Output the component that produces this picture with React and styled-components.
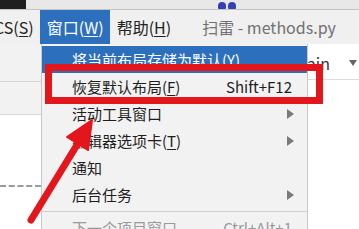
import React from 'react'
import styled, { createGlobalStyle } from 'styled-components'

const Global = createGlobalStyle`
  html, body { margin: 0; padding: 0; background: #fff; }
  body { overflow: hidden; }
  #root { width: 359px; height: 229px; }
`

const font = `"Noto Sans CJK SC", "Noto Sans", sans-serif`

const Page = styled.div`
  position: relative;
  width: 359px;
  height: 229px;
  overflow: hidden;
  background: #fff;
  font-family: ${font};
  display: flex;
  flex-direction: column;
`

const TopStrip = styled.div`
  height: 9px;
  flex: none;
  display: flex;
  background: #e8e8e8;
  border-bottom: 1px solid #c4c4c4;
`

const DarkBlock = styled.div`
  width: 26px;
  background: #1f1f1f;
`

const Dots = styled.div`
  margin-left: 192px;
  display: flex;
  gap: 2px;
  span {
    width: 8px;
    height: 7px;
    margin-top: 2px;
    border-radius: 4px 4px 1px 1px;
    background: #3540b5;
  }
`

const MenuBar = styled.div`
  height: 34px;
  flex: none;
  display: flex;
  align-items: stretch;
  background: #f0f0f0;
  margin-left: -15px;
  font-size: 16px;
  color: #222;
`

const MenuTitle = styled.div`
  display: flex;
  align-items: center;
  padding: 0 6px 0 7px;
  background: ${p => (p.$active ? '#2c6fbd' : 'transparent')};
  color: ${p => (p.$active ? '#fff' : '#222')};
  &:first-child { padding-left: 0; }
  u { text-decoration: underline; text-underline-offset: 2px; }
`

const WindowTitle = styled.div`
  display: flex;
  align-items: center;
  margin-left: 25px;
  color: #707070;
  font-size: 16px;
`

const Workspace = styled.div`
  flex: 1;
  display: flex;
`

const LeftCol = styled.div`
  width: 41px;
  display: flex;
  flex-direction: column;
`

const GrayRow = styled.div`
  height: ${p => p.$h}px;
  flex: none;
  background: #f2f2f2;
  border-bottom: 1px solid #d6d6d6;
  box-sizing: border-box;
`

const DashArea = styled.div`
  flex: 1;
  display: flex;
  flex-direction: column;
  padding-top: 70px;
`

const Dash = styled.div`
  height: 0;
  border-top: 2px dashed #9a9a9a;
`

const RightCol = styled.div`
  flex: 1;
  display: flex;
  flex-direction: column;
`

const Toolbar = styled.div`
  height: 36px;
  display: flex;
  align-items: center;
  justify-content: flex-end;
  padding-right: 2px;
  border-bottom: 1px solid #dcdcdc;
  box-sizing: border-box;
`

const Combo = styled.div`
  display: flex;
  align-items: center;
  gap: 19px;
  font-size: 16px;
  color: #333;
  margin-top: 2px;
`

const Caret = styled.span`
  width: 0;
  height: 0;
  border-left: 4px solid transparent;
  border-right: 4px solid transparent;
  border-top: 6px solid #666;
`

const Dropdown = styled.div`
  position: absolute;
  left: 41px;
  top: 44px;
  width: 267px;
  padding-top: 2px;
  background: #f2f2f2;
  border-left: 1px solid #c8c8c8;
  border-right: 1px solid #c8c8c8;
  box-sizing: border-box;
  font-size: 15px;
`

const Item = styled.div`
  height: 27px;
  display: flex;
  align-items: center;
  justify-content: space-between;
  padding: 0 9px 0 30px;
  background: ${p => (p.$active ? '#2c6fbd' : 'transparent')};
  color: ${p => (p.$active ? '#fff' : p.$disabled ? '#9a9a9a' : '#1e1e1e')};
  u { text-decoration: underline; text-underline-offset: 2px; }
`

const Shortcut = styled.span`
  color: inherit;
  padding-right: 6px;
`

const SubArrow = styled.span`
  width: 0;
  height: 0;
  margin-right: 4px;
  border-top: 5px solid transparent;
  border-bottom: 5px solid transparent;
  border-left: 7px solid #7a7a7a;
`

const Separator = styled.div`
  height: 1px;
  margin: 3px 0 2px;
  background: #cfcfcf;
`

const Overlay = styled.svg`
  position: absolute;
  left: 0;
  top: 0;
  pointer-events: none;
`

export default function App() {
  return (
    <Page>
      <Global />
      <TopStrip>
        <DarkBlock />
        <Dots><span /><span /></Dots>
      </TopStrip>
      <MenuBar>
        <MenuTitle>VCS(<u>S</u>)</MenuTitle>
        <MenuTitle $active>窗口(<u>W</u>)</MenuTitle>
        <MenuTitle>帮助(<u>H</u>)</MenuTitle>
        <WindowTitle>扫雷 - methods.py</WindowTitle>
      </MenuBar>
      <Workspace>
        <LeftCol>
          <GrayRow $h={38} />
          <GrayRow $h={33} />
          <DashArea><Dash /></DashArea>
        </LeftCol>
        <RightCol>
          <Toolbar>
            <Combo>main <Caret /></Combo>
          </Toolbar>
        </RightCol>
      </Workspace>

      <Dropdown>
        <Item $active><span>将当前布局存储为默认(<u>Y</u>)</span></Item>
        <Item><span>恢复默认布局(<u>F</u>)</span><Shortcut>Shift+F12</Shortcut></Item>
        <Item><span>活动工具窗口</span><SubArrow /></Item>
        <Item><span>编辑器选项卡(<u>T</u>)</span><SubArrow /></Item>
        <Item><span>通知</span></Item>
        <Item><span>后台任务</span><SubArrow /></Item>
        <Separator />
        <Item $disabled><span>下一个项目窗口</span><Shortcut>Ctrl+Alt+1</Shortcut></Item>
      </Dropdown>

      <Overlay width="359" height="229" viewBox="0 0 359 229">
        <rect x="48.5" y="67.5" width="271" height="33" fill="none" stroke="#e3161b" strokeWidth="7" />
        <line x1="31" y1="220" x2="80" y2="140" stroke="#e3161b" strokeWidth="7" strokeLinecap="round" />
        <polygon points="92,120 88,150 67,137" fill="#e3161b" stroke="#e3161b" strokeWidth="2" strokeLinejoin="round" />
      </Overlay>
    </Page>
  )
}
